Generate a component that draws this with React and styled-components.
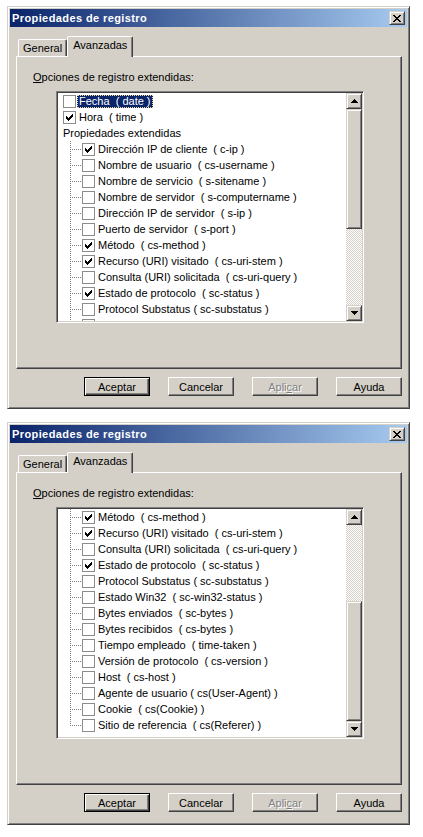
import styled, { createGlobalStyle } from "styled-components"

const GlobalStyle = createGlobalStyle`
	body {
		margin: 0;
		background: #fff;
		font-family: "Liberation Sans", Arial, sans-serif;
		font-size: 11px;
		color: #000;
	}
`

const FACE = "#D4D0C8"

const raised = `
	background: ${FACE};
	border: 1px solid;
	border-color: ${FACE} #404040 #404040 ${FACE};
	box-shadow: inset 1px 1px #fff, inset -1px -1px #808080;
	box-sizing: border-box;
`

const Page = styled.div`
	padding: 6px 0 0 7px;
	display: flex;
	flex-direction: column;
	gap: 13px;
`

const Dialog = styled.div`
	${raised}
	width: 403px;
	padding: 2px;
`

const TitleBar = styled.div`
	height: 18px;
	background: linear-gradient(to right, #0a246a, #a6caf0);
	display: flex;
	align-items: center;
	justify-content: space-between;
	padding: 0 2px 0 2px;
	color: #fff;
	font-weight: bold;
	letter-spacing: 0.4px;
`

const CloseButton = styled.div`
	${raised}
	width: 16px;
	height: 14px;
	display: flex;
	align-items: center;
	justify-content: center;
`

const Body = styled.div`
	padding: 9px 5px 10px 6px;
`

const TabRow = styled.div`
	display: flex;
	align-items: flex-end;
	height: 20px;
	padding-left: 2px;
	position: relative;
	z-index: 1;
`

const Tab = styled.div`
	box-sizing: border-box;
	height: ${(p) => (p.$active ? "21px" : "17px")};
	margin-bottom: ${(p) => (p.$active ? "-1px" : "0")};
	padding: 2px ${(p) => (p.$active ? "5px" : "4px")} 0;
	line-height: 13px;
	background: ${FACE};
	border: 1px solid;
	border-bottom: none;
	border-color: #fff #404040 transparent #fff;
	border-radius: 2px 2px 0 0;
	box-shadow: inset -1px 0 #808080;
`

const Panel = styled.div`
	box-sizing: border-box;
	height: 313px;
	border: 1px solid;
	border-color: #fff #404040 #404040 #fff;
	box-shadow: inset -1px -1px #808080;
	padding: 14px 0 0 16px;
`

const Label = styled.div`
	line-height: 13px;
	u {
		text-decoration: underline;
	}
`

const ListBox = styled.div`
	box-sizing: border-box;
	margin: 7px 0 0 23px;
	width: 308px;
	height: 232px;
	border: 1px solid;
	border-color: #808080 #fff #fff #808080;
	box-shadow: inset 1px 1px #404040, inset -1px -1px ${FACE};
	padding: 1px;
	background: #fff;
	display: flex;
`

const Items = styled.div`
	flex: 1;
	overflow: hidden;
	display: flex;
	flex-direction: column;
`

const Row = styled.div`
	flex: none;
	height: 16px;
	display: flex;
	align-items: center;
	padding-left: ${(p) => (p.$child ? "0" : "5px")};
	white-space: pre;
`

const GroupRow = styled(Row)`
	padding-left: 5px;
	line-height: 13px;
`

const Connector = styled.span`
	position: relative;
	flex: none;
	width: 24px;
	height: 16px;
	&::before {
		content: "";
		position: absolute;
		left: 12px;
		top: 0;
		width: 1px;
		height: ${(p) => (p.$last ? "9px" : "16px")};
		background: repeating-linear-gradient(to bottom, #808080 0 1px, transparent 1px 2px);
	}
	&::after {
		content: "";
		position: absolute;
		left: 13px;
		top: 8px;
		width: 10px;
		height: 1px;
		background: repeating-linear-gradient(to right, transparent 0 1px, #808080 1px 2px);
	}
`

const Box = styled.span`
	flex: none;
	box-sizing: border-box;
	width: 13px;
	height: 13px;
	border: 1px solid #8c8c8c;
	background: #fff;
	display: flex;
`

const ItemText = styled.span`
	margin-left: 1px;
	padding: 0 2px;
	line-height: 13px;
	background: ${(p) => (p.$selected ? "#0a246a" : "transparent")};
	color: ${(p) => (p.$selected ? "#fff" : "#000")};
	outline: ${(p) => (p.$selected ? "1px dotted #f5db95" : "none")};
	outline-offset: -1px;
`

const ScrollBar = styled.div`
	flex: none;
	width: 16px;
	display: flex;
	flex-direction: column;
`

const ArrowButton = styled.div`
	${raised}
	flex: none;
	height: 16px;
	display: flex;
	align-items: center;
	justify-content: center;
`

const Track = styled.div`
	flex: 1;
	display: flex;
	flex-direction: column;
	justify-content: ${(p) => (p.$at === "bottom" ? "flex-end" : "flex-start")};
	background-image: conic-gradient(${FACE} 25%, #fff 0 50%, ${FACE} 0 75%, #fff 0);
	background-size: 2px 2px;
`

const Thumb = styled.div`
	${raised}
	height: 120px;
`

const ButtonRow = styled.div`
	display: flex;
	justify-content: flex-end;
	gap: 18px;
	margin-top: 8px;
`

const Button = styled.div`
	box-sizing: border-box;
	width: 66px;
	height: 19px;
	display: flex;
	align-items: center;
	justify-content: center;
	background: ${FACE};
	border: 1px solid;
	border-color: ${(p) => (p.$default ? "#000" : `#fff #404040 #404040 #fff`)};
	box-shadow: ${(p) =>
		p.$default
			? "inset 1px 1px #fff, inset -1px -1px #404040, inset -2px -2px #808080"
			: "inset -1px -1px #808080"};
	color: ${(p) => (p.$disabled ? "#808080" : "#000")};
	text-shadow: ${(p) => (p.$disabled ? "1px 1px #fff" : "none")};
	u {
		text-decoration: underline;
	}
`

const pixels = (rows, color = "#000") =>
	rows.flatMap((xs, y) =>
		xs.map((x) => <rect key={`${x}-${y}`} x={x} y={y} width="1" height="1" fill={color} />)
	)

const CheckMark = () => (
	<svg width="11" height="11" viewBox="-2 -2 11 11" shapeRendering="crispEdges">
		{pixels([[6], [5, 6], [0, 4, 5, 6], [0, 1, 3, 4, 5], [0, 1, 2, 3, 4], [1, 2, 3], [2]])}
	</svg>
)

const CloseGlyph = () => (
	<svg width="8" height="7" viewBox="0 0 8 7" shapeRendering="crispEdges">
		{pixels([
			[0, 1, 6, 7],
			[1, 2, 5, 6],
			[2, 3, 4, 5],
			[3, 4],
			[2, 3, 4, 5],
			[1, 2, 5, 6],
			[0, 1, 6, 7],
		])}
	</svg>
)

const Arrow = ({ down }) => {
	const rows = [[3], [2, 3, 4], [1, 2, 3, 4, 5], [0, 1, 2, 3, 4, 5, 6]]
	return (
		<svg width="7" height="4" viewBox="0 0 7 4" shapeRendering="crispEdges">
			{pixels(down ? [...rows].reverse() : rows)}
		</svg>
	)
}

const Item = ({ text, checked, child, last, selected }) => (
	<Row $child={child}>
		{child && <Connector $last={last} />}
		<Box>{checked && <CheckMark />}</Box>
		<ItemText $selected={selected}>{text}</ItemText>
	</Row>
)

const firstItems = [
	{ text: "Dirección IP de cliente  ( c-ip )", checked: true },
	{ text: "Nombre de usuario  ( cs-username )" },
	{ text: "Nombre de servicio  ( s-sitename )" },
	{ text: "Nombre de servidor  ( s-computername )" },
	{ text: "Dirección IP de servidor  ( s-ip )" },
	{ text: "Puerto de servidor  ( s-port )" },
]

const sharedItems = [
	{ text: "Método  ( cs-method )", checked: true },
	{ text: "Recurso (URI) visitado  ( cs-uri-stem )", checked: true },
	{ text: "Consulta (URI) solicitada  ( cs-uri-query )" },
	{ text: "Estado de protocolo  ( sc-status )", checked: true },
	{ text: "Protocol Substatus ( sc-substatus )" },
	{ text: "Estado Win32  ( sc-win32-status )" },
]

const lastItems = [
	{ text: "Bytes enviados  ( sc-bytes )" },
	{ text: "Bytes recibidos  ( cs-bytes )" },
	{ text: "Tiempo empleado  ( time-taken )" },
	{ text: "Versión de protocolo  ( cs-version )" },
	{ text: "Host  ( cs-host )" },
	{ text: "Agente de usuario ( cs(User-Agent) )" },
	{ text: "Cookie  ( cs(Cookie) )" },
	{ text: "Sitio de referencia  ( cs(Referer) )", last: true },
]

const PropertiesDialog = ({ scrolled }) => {
	const children = scrolled
		? [...sharedItems, ...lastItems]
		: [...firstItems, ...sharedItems]

	return (
		<Dialog>
			<TitleBar>
				<span>Propiedades de registro</span>
				<CloseButton>
					<CloseGlyph />
				</CloseButton>
			</TitleBar>
			<Body>
				<TabRow>
					<Tab>General</Tab>
					<Tab $active>Avanzadas</Tab>
				</TabRow>
				<Panel>
					<Label>
						<u>O</u>pciones de registro extendidas:
					</Label>
					<ListBox>
						<Items>
							{!scrolled && (
								<>
									<Item text="Fecha  ( date )" selected />
									<Item text="Hora  ( time )" checked />
									<GroupRow>Propiedades extendidas</GroupRow>
								</>
							)}
							{children.map((item) => (
								<Item key={item.text} child {...item} />
							))}
						</Items>
						<ScrollBar>
							<ArrowButton>
								<Arrow />
							</ArrowButton>
							<Track $at={scrolled ? "bottom" : "top"}>
								<Thumb />
							</Track>
							<ArrowButton>
								<Arrow down />
							</ArrowButton>
						</ScrollBar>
					</ListBox>
				</Panel>
				<ButtonRow>
					<Button $default>Aceptar</Button>
					<Button>Cancelar</Button>
					<Button $disabled>
						Apli<u>c</u>ar
					</Button>
					<Button>Ayuda</Button>
				</ButtonRow>
			</Body>
		</Dialog>
	)
}

const App = () => (
	<>
		<GlobalStyle />
		<Page>
			<PropertiesDialog />
			<PropertiesDialog scrolled />
		</Page>
	</>
)

export default App
